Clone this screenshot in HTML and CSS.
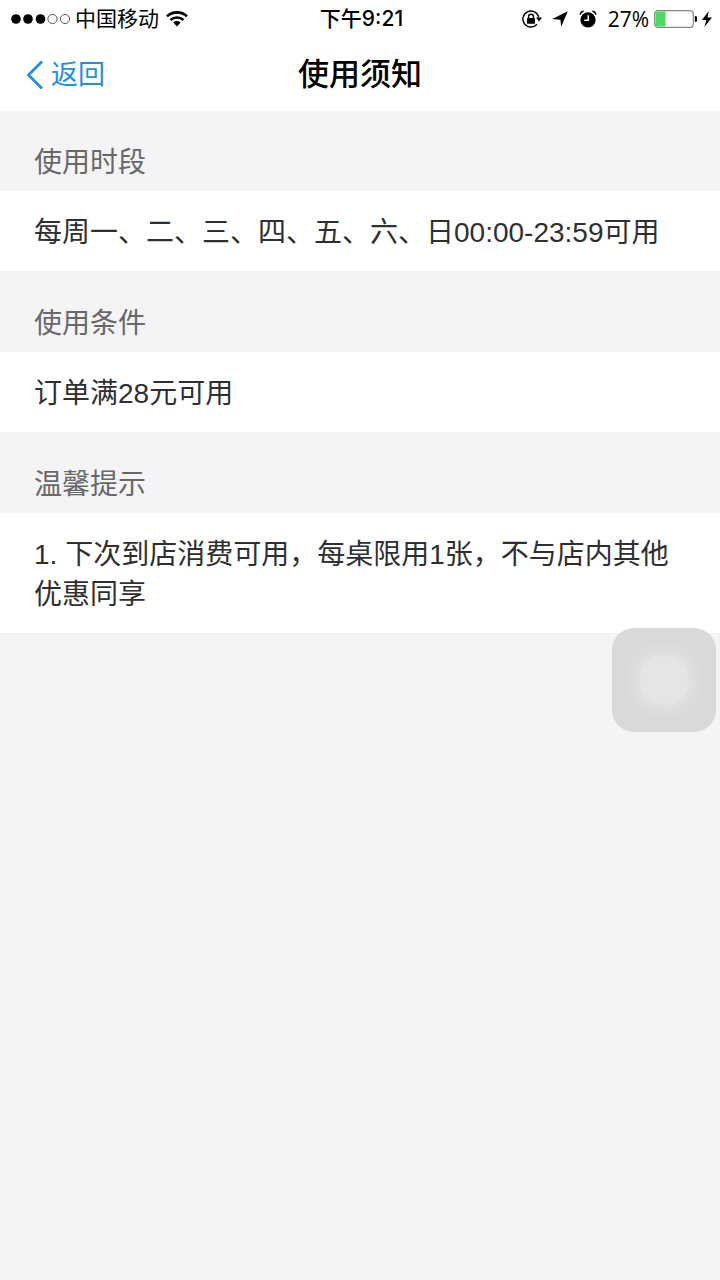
FILE: index.html
```html
<!DOCTYPE html>
<html lang="zh-CN">
<head>
  <meta charset="utf-8">
  <meta name="viewport" content="width=device-width, initial-scale=1">
  <title>使用须知</title>
  <link rel="stylesheet" href="styles.css">
</head>
<body>
  <div class="status-bar">
    <div class="status-left">
      <svg class="signal" width="60" height="12" viewBox="0 0 60 12" aria-hidden="true">
        <circle cx="5" cy="6" r="4.800"/>
        <circle cx="17" cy="6" r="4.800"/>
        <circle cx="29.500" cy="6" r="4.800"/>
        <circle class="signal-empty" cx="41.500" cy="6" r="4.600"/>
        <circle class="signal-empty" cx="54" cy="6" r="4.600"/>
      </svg>
      <span>中国移动</span>
      <svg class="wifi" width="22" height="16" viewBox="0 0 22 16" aria-hidden="true">
        <path d="M1 5.400a14.500 14.500 0 0 1 20 0M4.500 9a9.500 9.500 0 0 1 13 0" fill="none" stroke="#000" stroke-width="2.600"/>
        <path d="M7.300 11.400a5.500 5.500 0 0 1 7.400 0L11 15.400z"/>
      </svg>
    </div>
    <div class="status-time">下午9:21</div>
    <div class="status-right">
      <svg width="20" height="18" viewBox="0 0 20 18" aria-hidden="true">
        <path d="M16.700 7.200A8 8 0 1 0 15 14.200" fill="none" stroke="#000" stroke-width="1.400"/>
        <path d="M14 7.500h6L17 11.500z"/>
        <rect x="5" y="8" width="8" height="5.800" rx=".6"/>
        <path d="M6.600 8.500V6.600a2.400 2.400 0 0 1 4.800 0v1.900" fill="none" stroke="#000" stroke-width="1.400"/>
      </svg>
      <svg class="location" width="16" height="16" viewBox="0 0 16 16" aria-hidden="true">
        <path d="M15.800.3L9.200 15.800 8.400 8.700.2 7.900z"/>
      </svg>
      <svg class="alarm" width="18" height="18" viewBox="0 0 18 18" aria-hidden="true">
        <circle cx="9" cy="9.800" r="7.600"/>
        <path d="M1 4.500A5 5 0 0 1 4.600 1M17 4.500A5 5 0 0 0 13.400 1" fill="none" stroke="#000" stroke-width="1.800"/>
        <path d="M9.300 5.200v5H5.300" fill="none" stroke="#fff" stroke-width="1.500"/>
      </svg>
      <span class="percent">27%</span>
      <svg class="battery" width="43" height="18" viewBox="0 0 43 18" aria-hidden="true">
        <rect x=".7" y=".7" width="38.600" height="16.600" rx="3" fill="#fff" stroke="#888" stroke-width="1.200"/>
        <path d="M3 1.500h8.500v15H3A1.500 1.500 0 0 1 1.500 15V3A1.500 1.500 0 0 1 3 1.500z" fill="#4cd964"/>
        <path d="M40.800 6a3 3 0 0 1 0 6z"/>
      </svg>
      <svg class="bolt" width="10" height="16" viewBox="0 0 10 16" aria-hidden="true">
        <path d="M6.800 0L0 9h4.300L2.400 16 10 6.500H5.500z"/>
      </svg>
    </div>
  </div>

  <header class="nav-bar">
    <button class="back" type="button">
      <svg width="18" height="30" viewBox="0 0 18 30" aria-hidden="true">
        <path d="M16 1.500L2.500 15 16 28.500" fill="none" stroke="currentColor" stroke-width="2.800"/>
      </svg>
      <span>返回</span>
    </button>
    <h1 class="nav-title">使用须知</h1>
  </header>

  <main>
    <section>
      <h2 class="section-title">使用时段</h2>
      <p class="section-body">每周一、二、三、四、五、六、日00:00-23:59可用</p>
    </section>
    <section>
      <h2 class="section-title">使用条件</h2>
      <p class="section-body">订单满28元可用</p>
    </section>
    <section>
      <h2 class="section-title">温馨提示</h2>
      <p class="section-body">1. 下次到店消费可用，每桌限用1张，不与店内其他优惠同享</p>
    </section>
  </main>

  <button class="assistive" type="button" aria-label="辅助触控"></button>
</body>
</html>
```
FILE: styles.css
```css
* {
  box-sizing: border-box;
}

body {
  margin: 0;
  min-height: 100vh;
  background: #f4f4f6;
  color: #2f2f31;
  font-family: "Liberation Sans", "Noto Sans CJK SC", sans-serif;
  font-size: 28px;
  line-height: 40px;
}

svg {
  display: block;
  flex: none;
}

.status-bar {
  display: grid;
  grid-template-columns: 1fr auto 1fr;
  align-items: center;
  height: 36px;
  padding: 0 8px 0 11px;
  background: #fff;
  color: #000;
  font-family: Inter, "Noto Sans CJK SC", sans-serif;
  font-size: 21px;
  line-height: 36px;
  white-space: nowrap;
}

.status-left,
.status-right {
  display: flex;
  align-items: center;
}

.status-left {
  gap: 4px;
}

.signal-empty {
  fill: none;
  stroke: #555;
  stroke-width: 1;
}

.wifi {
  margin-left: 3px;
}

.status-time {
  padding-top: 1px;
  font-weight: 500;
}

.status-right {
  justify-content: flex-end;
}

.location {
  margin-left: 10px;
}

.alarm {
  margin-left: 11px;
}

.percent {
  margin-left: 11px;
  font-family: "Open Sans", sans-serif;
  font-size: 21px;
}

.battery {
  margin-left: 5px;
}

.bolt {
  margin-left: 5px;
}

.nav-bar {
  display: grid;
  grid-template-columns: 1fr auto 1fr;
  align-items: center;
  height: 75px;
  padding: 2px 26px 0;
  background: #fff;
}

.back {
  display: flex;
  align-items: center;
  justify-self: start;
  gap: 7px;
  padding: 0;
  border: 0;
  background: none;
  color: #2490dc;
  font: inherit;
  font-size: 27px;
}

.nav-title {
  margin: 0;
  color: #000;
  font-size: 31px;
  font-weight: 500;
}

.section-title {
  margin: 0;
  padding: 32px 34px 8px;
  color: #68686a;
  font-size: 28px;
  font-weight: 400;
}

.section-body {
  margin: 0;
  padding: 22px 34px 18px;
  border-bottom: 1px solid #f0f0f2;
  background: #fff;
}

.assistive {
  position: fixed;
  top: 628px;
  right: 4px;
  width: 104px;
  height: 104px;
  padding: 0;
  border: 0;
  border-radius: 22px;
  background: radial-gradient(circle, #e5e5e7 0 24px, #dfdfe1 26px 30px, #dcdcde 32px 36px, #d9d9db 39px);
}
```
